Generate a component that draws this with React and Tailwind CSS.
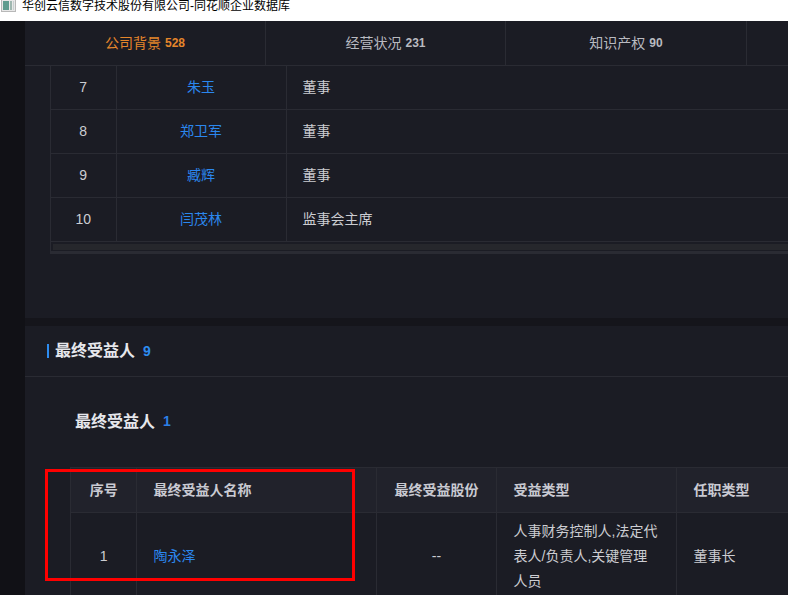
const font = { fontFamily: '"Liberation Sans","Noto Sans CJK SC",sans-serif' };

function TitleBar() {
  return (
    <div className="h-[21px] bg-white flex items-center shrink-0 overflow-hidden">
      <svg width="15" height="13" viewBox="0 0 15 13" className="ml-[1px] mr-[6px] -mt-[10px]">
        <rect x="0.5" y="0.5" width="14" height="12" fill="#e8e8e8" stroke="#b8b8b8" />
        <rect x="2" y="2" width="6" height="9" fill="#5f9c8f" />
        <rect x="9" y="2" width="2" height="9" fill="#9fb7b0" />
        <rect x="12" y="2" width="1" height="9" fill="#c8d0d0" />
      </svg>
      <span className="text-[12px] leading-[12px] text-black -mt-[10px]">华创云信数字技术股份有限公司-同花顺企业数据库</span>
    </div>
  );
}

function Tab({ label, count, active, wide }) {
  return (
    <div className={`h-full flex items-center justify-center gap-1 text-[14px] shrink-0 border-r border-[#2a2b33] ${wide ? "w-[241px]" : "w-[240px]"} ${active ? "text-[#e5862b]" : "text-[#b9bac0]"}`}>
      <span>{label}</span>
      <span className="text-[12px] font-bold">{count}</span>
    </div>
  );
}

function TopRow({ no, name, role, first }) {
  const pad = first ? "pt-[2px]" : "";
  return (
    <tr className="h-[44px] border-b border-[#2a2b33]">
      <td className={`text-center text-[#cccdd2] border-r border-[#2a2b33] ${pad}`}>{no}</td>
      <td className={`text-center text-[#2b87ee] border-r border-[#2a2b33] ${pad}`}>{name}</td>
      <td className={`pl-[16px] text-[#cccdd2] ${pad}`}>{role}</td>
    </tr>
  );
}

function Th({ children, className = "" }) {
  return <th className={`font-bold text-[14px] text-[#c9cad2] border-r border-[#2a2b33] pt-[2px] ${className}`}>{children}</th>;
}

export default function App() {
  return (
    <div style={font} className="relative w-[788px] h-[595px] overflow-hidden flex flex-col bg-[#111116]">
      <TitleBar />
      <div className="flex-1 flex min-h-0">
        <div className="w-[25px] shrink-0 bg-[#111116]" />
        <div className="w-[763px] shrink-0 flex flex-col bg-[#15151b]">
          {/* Upper section */}
          <section className="h-[297px] shrink-0 bg-[#1b1c24]">
            <div className="h-[45px] flex border-b border-[#2a2b33]">
              <Tab label="公司背景" count="528" active wide />
              <Tab label="经营状况" count="231" />
              <Tab label="知识产权" count="90" wide />
            </div>
            <div className="-mt-px ml-[25px] border-x border-b-[3px] border-[#2a2b33] w-[760px]">
              <table className="table-fixed w-[760px] text-[14px] border-collapse">
                <colgroup>
                  <col className="w-[65px]" />
                  <col className="w-[170px]" />
                  <col />
                </colgroup>
                <tbody>
                  <TopRow no="7" name="朱玉" role="董事" first />
                  <TopRow no="8" name="郑卫军" role="董事" />
                  <TopRow no="9" name="臧辉" role="董事" />
                  <TopRow no="10" name="闫茂林" role="监事会主席" />
                </tbody>
              </table>
              <div className="h-[9px] px-[2px] pt-[2px] pb-[1px]">
                <div className="h-[6px] bg-[#26272c]" />
              </div>
            </div>
          </section>

          {/* Lower section */}
          <section className="mt-[8px] flex-1 min-h-0 bg-[#1b1c24]">
            <div className="h-[51px] flex items-center border-b border-[#2a2b33] pl-[22px]">
              <span className="w-[2px] h-[14px] bg-[#2d8cf0] mr-[6px]" />
              <span className="text-[16px] font-bold text-[#e6e7ec]">最终受益人</span>
              <span className="ml-[8px] text-[14px] font-bold text-[#2d8cf0]">9</span>
            </div>
            <div className="h-[90px] flex items-center pl-[50px] pb-[1px]">
              <span className="text-[16px] font-bold text-[#e6e7ec]">最终受益人</span>
              <span className="ml-[8px] text-[14px] font-bold text-[#2b7fe6]">1</span>
            </div>
            <div className="ml-[45px] w-[760px] border-l border-t border-[#2a2b33]">
              <table className="table-fixed w-[760px] text-[14px] border-collapse">
                <colgroup>
                  <col className="w-[65px]" />
                  <col className="w-[240px]" />
                  <col className="w-[120px]" />
                  <col className="w-[180px]" />
                  <col />
                </colgroup>
                <thead>
                  <tr className="h-[44px] bg-[#21222b] border-b border-[#2a2b33]">
                    <Th className="text-center pl-[1px]">序号</Th>
                    <Th className="text-left pl-[17px]">最终受益人名称</Th>
                    <Th className="text-center pl-[1px]">最终受益股份</Th>
                    <Th className="text-left pl-[17px]">受益类型</Th>
                    <Th className="text-left pl-[17px]">任职类型</Th>
                  </tr>
                </thead>
                <tbody>
                  <tr className="h-[88px] text-[#cccdd2]">
                    <td className="text-center pl-[1px] border-r border-[#2a2b33]">1</td>
                    <td className="pl-[17px] text-[#2b87ee] border-r border-[#2a2b33]">陶永泽</td>
                    <td className="text-center pl-[1px] border-r border-[#2a2b33]">--</td>
                    <td className="pl-[17px] pr-[15px] leading-[25px] border-r border-[#2a2b33]">人事财务控制人,法定代表人/负责人,关键管理人员</td>
                    <td className="pl-[17px]">董事长</td>
                  </tr>
                </tbody>
              </table>
            </div>
          </section>
        </div>
      </div>
      {/* Annotation drawn over the screenshot */}
      <div className="absolute left-[45px] top-[469px] w-[310px] h-[112px] border-[3px] border-[#ff0000]" />
    </div>
  );
}
